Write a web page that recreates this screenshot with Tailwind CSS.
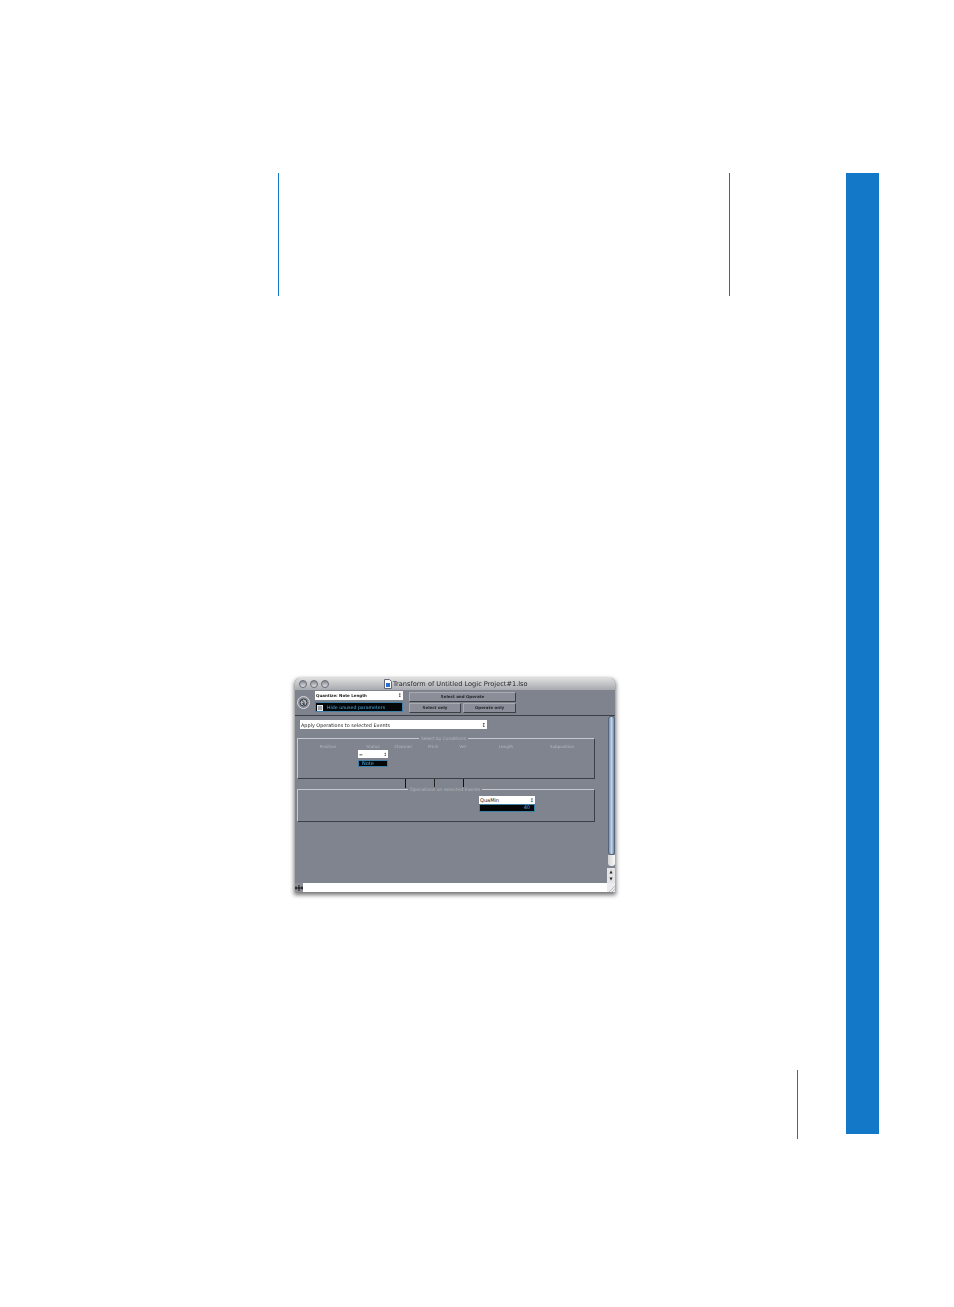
<!DOCTYPE html>
<html lang="en">
<head>
    <meta charset="UTF-8">
    <meta name="viewport" content="width=device-width, initial-scale=1.0">
    <title>Transform window page</title>
    <script src="https://cdn.jsdelivr.net/npm/@tailwindcss/browser@4"></script>
</head>
<body class="bg-white font-['DejaVu_Sans',sans-serif]">
    <div class="flex w-[954px] h-[1307px] overflow-hidden">
        <!-- Page column -->
        <div class="w-[846px] pt-[173px]">
            <!-- Chapter rules -->
            <div class="flex h-[123px] pl-[278px]">
                <div class="w-px bg-[#1478c8]"></div>
                <div class="w-px ml-[450px] bg-[#5a6068]"></div>
            </div>

            <!-- Transform window -->
            <div class="flex flex-col w-[320px] h-[214px] mt-[382px] ml-[295px] rounded-t-[5px] overflow-hidden bg-[#80848f] blur-[0.3px] shadow-[0_2px_4px_1px_rgba(0,0,0,0.55)]">
                <!-- Title bar -->
                <div class="flex items-center h-[12px] shrink-0 bg-gradient-to-b from-[#dedede] to-[#a8aab0]">
                    <div class="flex gap-[3px] ml-[4px]">
                        <span class="w-[8px] h-[8px] rounded-full border border-[#666a72] bg-gradient-to-b from-[#858992] to-[#dfe1e4]"></span>
                        <span class="w-[8px] h-[8px] rounded-full border border-[#666a72] bg-gradient-to-b from-[#858992] to-[#dfe1e4]"></span>
                        <span class="w-[8px] h-[8px] rounded-full border border-[#666a72] bg-gradient-to-b from-[#858992] to-[#dfe1e4]"></span>
                    </div>
                    <svg class="ml-[55px]" width="8" height="10" viewBox="0 0 8 10">
                        <path d="M.5.5h5l2 2v7h-7z" fill="#fff" stroke="#667"/>
                        <rect x="2" y="4" width="4" height="4" fill="#2a6fd0"/>
                    </svg>
                    <span class="ml-[1px] text-[6.6px] leading-none whitespace-nowrap text-[#26282c]">Transform of Untitled Logic Project#1.lso</span>
                </div>

                <!-- Toolbar -->
                <div class="flex h-[26px] shrink-0 border-b border-[#3c3f46] bg-[#7f838e]">
                    <div class="flex items-center justify-center w-[13px] h-[13px] mt-[6px] ml-[2px] rounded-full border border-[#d8dade] bg-[#8a8e98]">
                        <svg width="9" height="9" viewBox="0 0 9 9">
                            <circle cx="4.5" cy="4.5" r="3.5" fill="#b4b7bd" stroke="#3a3c44"/>
                            <path d="M2.5 2l2.5 2.5v2.5l-1.5-2" fill="none" stroke="#2c2e34"/>
                        </svg>
                    </div>
                    <div class="flex flex-col w-[88px] ml-[5px] pt-[1px]">
                        <div class="flex items-center justify-between h-[9px] pt-[1px] px-[1px] bg-white text-[4px] font-bold text-[#222]">
                            <span>Quantize: Note Length</span><span class="text-[5px] font-normal">&#8597;</span>
                        </div>
                        <div class="flex items-center h-[10px] mt-[2px] pt-[1px] border border-[#3f80a8] bg-[#050608] text-[4.7px] text-[#4fb2e6]">
                            <span class="w-[6px] h-[6px] ml-[1px] bg-[#9ea2ac] border border-[#e8e8e8]"></span>
                            <span class="ml-[4px]">Hide unused parameters</span>
                        </div>
                    </div>
                    <div class="flex flex-col w-[107px] ml-[6px] pt-[2px]">
                        <div class="flex items-center justify-center h-[10px] border border-t-[#a8abb2] border-l-[#a8abb2] border-r-[#3c3f46] border-b-[#3c3f46] rounded-[1px] bg-[#8b8e98] text-[4px] font-bold text-[#26282c]">Select and Operate</div>
                        <div class="flex gap-[2px] mt-[1px]">
                            <div class="flex items-center justify-center w-[52px] h-[10px] border border-t-[#a8abb2] border-l-[#a8abb2] border-r-[#3c3f46] border-b-[#3c3f46] rounded-[1px] bg-[#8b8e98] text-[4px] font-bold text-[#26282c]">Select only</div>
                            <div class="flex items-center justify-center w-[53px] h-[10px] border border-t-[#a8abb2] border-l-[#a8abb2] border-r-[#3c3f46] border-b-[#3c3f46] rounded-[1px] bg-[#8b8e98] text-[4px] font-bold text-[#26282c]">Operate only</div>
                        </div>
                    </div>
                </div>

                <!-- Content with scrollbar -->
                <div class="flex flex-1 min-h-0">
                    <div class="w-[312px] pl-[2px]">
                        <!-- Apply select -->
                        <div class="flex items-center justify-between w-[187px] h-[9px] mt-[4px] ml-[3px] pt-[2px] px-[1px] bg-white text-[4.9px] text-[#222]">
                            <span>Apply Operations to selected Events</span><span class="text-[5.5px]">&#8597;</span>
                        </div>

                        <!-- Select by Conditions -->
                        <div class="relative w-[298px] h-[41px] mt-[9px] border border-t-[#c6c8cd] border-l-[#c6c8cd] border-r-[#3c3f46] border-b-[#3c3f46]">
                            <span class="absolute top-[-3px] left-[121px] px-[2px] bg-[#80848f] text-[4.4px] leading-[5px] whitespace-nowrap text-[#b4b7bd]">Select by Conditions</span>
                            <div class="flex pt-[5px] text-[4.2px] leading-[5px] text-center text-[#b4b7bd]">
                                <div class="w-[60px]">Position</div>
                                <div class="w-[30px]">
                                    Status
                                    <div class="flex items-center justify-between h-[8px] mt-[1px] px-[1px] bg-white text-[4.6px] text-[#222]"><span>=</span><span>&#8597;</span></div>
                                    <div class="h-[7px] mt-[2px] border border-[#3f80a8] bg-[#050608] text-left pl-[3px] text-[5px] leading-[5px] text-[#4fb2e6]">Note</div>
                                </div>
                                <div class="w-[30px]">Channel</div>
                                <div class="w-[30px]">Pitch</div>
                                <div class="w-[29px]">Vel</div>
                                <div class="w-[58px]">Length</div>
                                <div class="w-[54px]">Subposition</div>
                            </div>
                        </div>

                        <!-- Tick marks between the groups -->
                        <div class="flex h-[9px] pl-[108px]">
                            <div class="w-px bg-[#111]"></div>
                            <div class="w-px ml-[28px] bg-[#222]"></div>
                            <div class="w-px ml-[28px] bg-[#111]"></div>
                        </div>

                        <!-- Operations on selected Events -->
                        <div class="relative w-[298px] h-[33px] mt-[1px] border border-t-[#c6c8cd] border-l-[#c6c8cd] border-r-[#3c3f46] border-b-[#3c3f46]">
                            <span class="absolute top-[-3px] left-[110px] px-[2px] bg-[#80848f] text-[4.6px] leading-[5px] whitespace-nowrap text-[#b4b7bd]">Operations on selected Events</span>
                            <div class="w-[56px] ml-[181px] mt-[6px]">
                                <div class="flex items-center justify-between h-[8px] pt-[1px] px-[1px] bg-white text-[5px] text-[#222]"><span>QuaMin</span><span>&#8597;</span></div>
                                <div class="flex items-center justify-end h-[8px] border border-[#3f80a8] bg-[#050608] pr-[4px] text-[5px] text-[#4fb2e6]">40</div>
                            </div>
                        </div>
                    </div>

                    <!-- Vertical scrollbar -->
                    <div class="flex flex-col w-[8px] bg-[#80848f]">
                        <div class="w-[7px] h-[139px] ml-[1px] rounded-[3px] border border-[#52657c] bg-gradient-to-r from-[#7d94b0] via-[#c4d2e2] to-[#7490b2]"></div>
                        <div class="w-[7px] h-[11px] ml-[1px] rounded-b-[3px] bg-gradient-to-r from-[#d4d4d6] to-[#fafafa]"></div>
                        <div class="flex flex-col items-center w-[8px] h-[15px] mt-auto bg-[#e4e4e6] text-[4px] leading-[7px] text-[#222]">
                            <span>&#9650;</span><span>&#9660;</span>
                        </div>
                    </div>
                </div>

                <!-- Bottom bar -->
                <div class="flex h-[9px] shrink-0 bg-white">
                    <div class="flex items-center justify-center w-[8px] bg-[#8c8f98]">
                        <svg width="8" height="8" viewBox="0 0 8 8">
                            <path d="M0 4h8M4 1v6M1 2.5v3M7 2.5v3" fill="none" stroke="#111"/>
                        </svg>
                    </div>
                    <div class="flex items-end justify-end w-[8px] ml-auto bg-[#ececee]">
                        <svg width="7" height="7" viewBox="0 0 7 7">
                            <path d="M1 7l6-6M4 7l3-3" stroke="#b8babf"/>
                        </svg>
                    </div>
                </div>
            </div>

            <!-- Footer rule -->
            <div class="w-px h-[69px] mt-[178px] ml-[797px] bg-[#5a6068]"></div>
        </div>

        <!-- Blue side tab -->
        <div class="w-[33px] h-[961px] mt-[173px] bg-[#1478c8]"></div>
    </div>
</body>
</html>
